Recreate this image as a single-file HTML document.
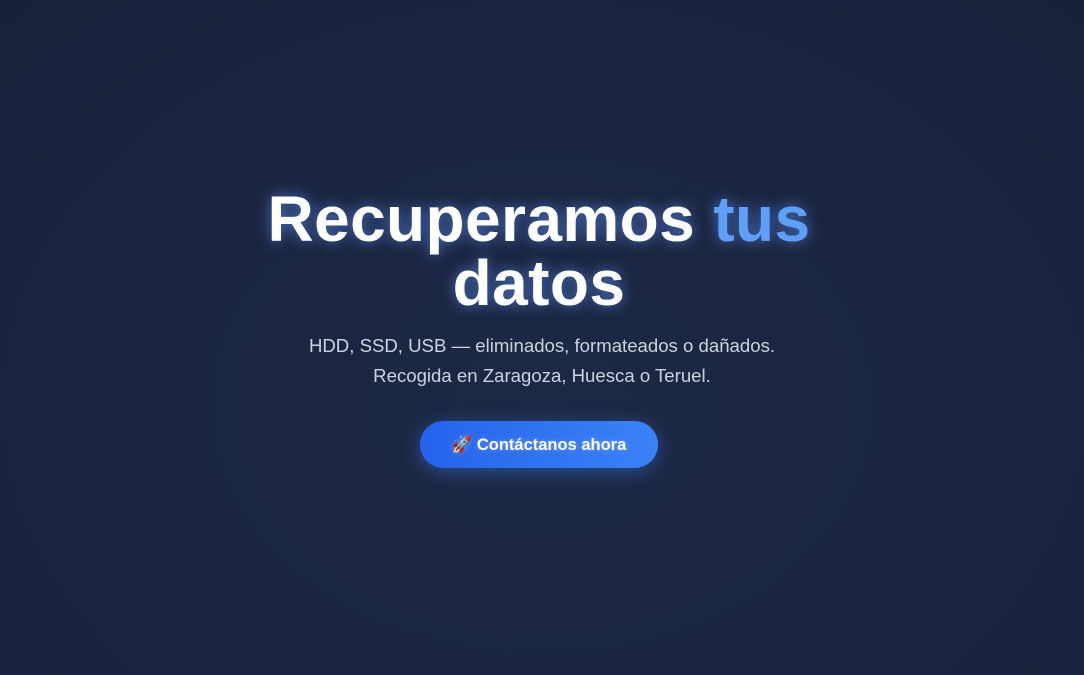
<!DOCTYPE html>
<html><head><meta charset="utf-8"><style>
html,body{margin:0;padding:0;width:1084px;height:675px;overflow:hidden}
body{background:radial-gradient(ellipse at 50% 60%,#1d2844 0%,#1b2540 50%,#18213a 100%);font-family:"Liberation Sans",sans-serif;position:relative}
h1{position:absolute;left:-6px;right:0;top:187px;margin:0;text-align:center;color:#fff;font-weight:700;font-size:64px;line-height:64px;letter-spacing:0.4px;text-shadow:0 0 14px rgba(96,150,255,.7)}
h1 span{color:#5ea0f8}
p{position:absolute;left:0;right:0;top:331px;margin:0;text-align:center;color:#cdd3de;font-size:18.6px;line-height:30px}
.btn{position:absolute;left:420px;top:421px;width:238px;height:47px;border-radius:24px;background:linear-gradient(90deg,#2563eb,#3b82f6);box-shadow:0 4px 20px rgba(59,130,246,.45);color:#fff;font-weight:700;font-size:16.5px;line-height:49px;text-align:center;text-shadow:0 0 6px rgba(255,255,255,.3)}
</style></head><body>
<h1>Recuperamos <span>tus</span><br>datos</h1>
<p>HDD, SSD, USB — eliminados, formateados o dañados.<br>Recogida en Zaragoza, Huesca o Teruel.</p>
<div class="btn">🚀 Contáctanos ahora</div>
</body></html>
